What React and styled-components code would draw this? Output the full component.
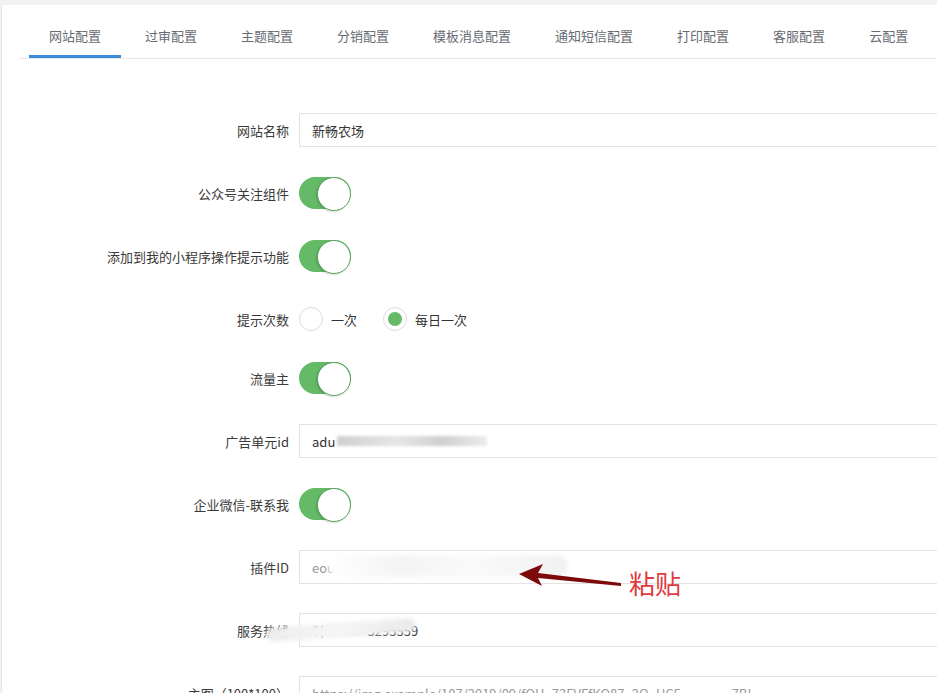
import styled, { createGlobalStyle } from 'styled-components';

const tabs = ['网站配置', '过审配置', '主题配置', '分销配置', '模板消息配置', '通知短信配置', '打印配置', '客服配置', '云配置'];

export default function App() {
    return (
        <>
            <GlobalStyle />
            <Page>
                <Card>
                    <TabBar>
                        {tabs.map((t, i) => (
                            <Tab key={t} $active={i === 0}>
                                {t}
                            </Tab>
                        ))}
                    </TabBar>
                    <Form>
                        <Item>
                            <Label>网站名称</Label>
                            <Input>新畅农场</Input>
                        </Item>
                        <Item>
                            <Label>公众号关注组件</Label>
                            <Switch />
                        </Item>
                        <Item>
                            <Label>添加到我的小程序操作提示功能</Label>
                            <Switch />
                        </Item>
                        <Item $gap={25}>
                            <Label>提示次数</Label>
                            <RadioGroup>
                                <Radio>
                                    <Circle />
                                    一次
                                </Radio>
                                <Radio>
                                    <Circle $checked />
                                    每日一次
                                </Radio>
                            </RadioGroup>
                        </Item>
                        <Item>
                            <Label>流量主</Label>
                            <Switch />
                        </Item>
                        <Item>
                            <Label>广告单元id</Label>
                            <Input>
                                adu
                                <Smudge $w={150} $tone="#cfcfcf" />
                            </Input>
                        </Item>
                        <Item>
                            <Label>企业微信-联系我</Label>
                            <Switch />
                        </Item>
                        <Item>
                            <Label>插件ID</Label>
                            <Input $faint>
                                eou
                                <Wipe className="plugin" />
                            </Input>
                            <Arrow viewBox="0 0 110 30">
                                <path d="M4 14 L28 4 L23 13 L106 23 L106 26 L23 18 L27 26 Z" fill="#7d0a0a" />
                            </Arrow>
                            <Note>粘贴</Note>
                        </Item>
                        <Item>
                            <Label>服务热线</Label>
                            <Input>
                                0(
                                <Smudge $w={40} $tone="#d8d8d8" />
                                3295559
                            </Input>
                            <Wipe className="phone" />
                        </Item>
                        <Item>
                            <Label>主图（100*100）</Label>
                            <Input $faint>https://img.example/107/2019/09/fQH_73FVFfKQ87_2Q_UC5_______7BL</Input>
                        </Item>
                    </Form>
                </Card>
            </Page>
        </>
    );
}

const GlobalStyle = createGlobalStyle`
    html, body {
        margin: 0;
        padding: 0;
        background: #f2f2f2;
        overflow: hidden;
    }
    body {
        font-family: "Noto Sans CJK SC", "Noto Sans", "Liberation Sans", sans-serif;
        font-size: 13px;
        color: #333;
    }
    * {
        box-sizing: border-box;
    }
`;

const Page = styled.div`
    padding: 5px 0 0 1px;
    height: 693px;
`;

const Card = styled.div`
    background: #fff;
    border-left: 1px solid #e8e8e8;
    height: 100%;
    overflow: hidden;
`;

const TabBar = styled.div`
    display: flex;
    gap: 4px;
    margin-left: 17px;
    padding-left: 10px;
    border-bottom: 1px solid #e6e8eb;
    width: 1100px;
`;

const Tab = styled.div`
    height: 53px;
    padding: 21px 20px 0;
    line-height: 20px;
    color: #676b73;
    white-space: nowrap;
    border-bottom: 3px solid ${(p) => (p.$active ? '#3d8ad8' : 'transparent')};
`;

const Form = styled.div`
    padding-top: 54px;
`;

const Item = styled.div`
    position: relative;
    display: flex;
    align-items: center;
    height: 34px;
    margin-bottom: ${(p) => p.$gap || 29}px;
`;

const Label = styled.div`
    flex: 0 0 297px;
    width: 297px;
    padding-right: 10px;
    text-align: right;
    color: #3a3a3a;
    white-space: nowrap;
`;

const Input = styled.div`
    position: relative;
    display: flex;
    align-items: center;
    flex: 0 0 700px;
    height: 34px;
    padding-left: 12px;
    border: 1px solid #e3e3e3;
    color: ${(p) => (p.$faint ? '#999' : '#333')};
    white-space: nowrap;
`;

const Smudge = styled.span`
    display: inline-block;
    width: ${(p) => p.$w}px;
    height: 10px;
    margin: 0 2px;
    background: linear-gradient(90deg, ${(p) => p.$tone}, #e6e6e6 40%, ${(p) => p.$tone} 70%, #ececec);
    filter: blur(1.5px);
`;

const Wipe = styled.span`
    position: absolute;
    background: #fff;
    border-radius: 12px;
    filter: blur(2px);

    &.plugin {
        left: 28px;
        top: 4px;
        width: 240px;
        height: 22px;
        background: linear-gradient(90deg, #fff, #f4f4f4 30%, #fafafa 60%, #f1f1f1);
    }
    &.phone {
        left: 264px;
        top: 10px;
        width: 150px;
        height: 14px;
        background: linear-gradient(90deg, #ededed, #f6f6f6 50%, #e9e9e9);
        transform: rotate(-4deg);
    }
`;

const Switch = styled.div`
    position: relative;
    flex: 0 0 52px;
    height: 32px;
    border-radius: 16px;
    background: #64ba67;

    &::after {
        content: '';
        position: absolute;
        right: 0;
        top: 0;
        width: 32px;
        height: 32px;
        border-radius: 50%;
        background: #fff;
        border: 1px solid #5aa35d;
        box-shadow: -1px 1px 2px rgba(0, 0, 0, 0.15);
    }
`;

const RadioGroup = styled.div`
    display: flex;
    align-items: center;
    gap: 26px;
`;

const Radio = styled.label`
    display: flex;
    align-items: center;
    gap: 8px;
    color: #333;
`;

const Circle = styled.span`
    position: relative;
    width: 24px;
    height: 24px;
    border-radius: 50%;
    border: 1px solid #dcdcdc;
    background: #fff;

    &::after {
        content: '';
        display: ${(p) => (p.$checked ? 'block' : 'none')};
        position: absolute;
        left: 4px;
        top: 4px;
        width: 14px;
        height: 14px;
        border-radius: 50%;
        background: #64ba67;
    }
`;

const Arrow = styled.svg`
    position: absolute;
    left: 513px;
    top: 10px;
    width: 110px;
    height: 30px;
`;

const Note = styled.div`
    position: absolute;
    left: 627px;
    top: 16px;
    font-size: 26px;
    line-height: 34px;
    color: #e23a3f;
`;
